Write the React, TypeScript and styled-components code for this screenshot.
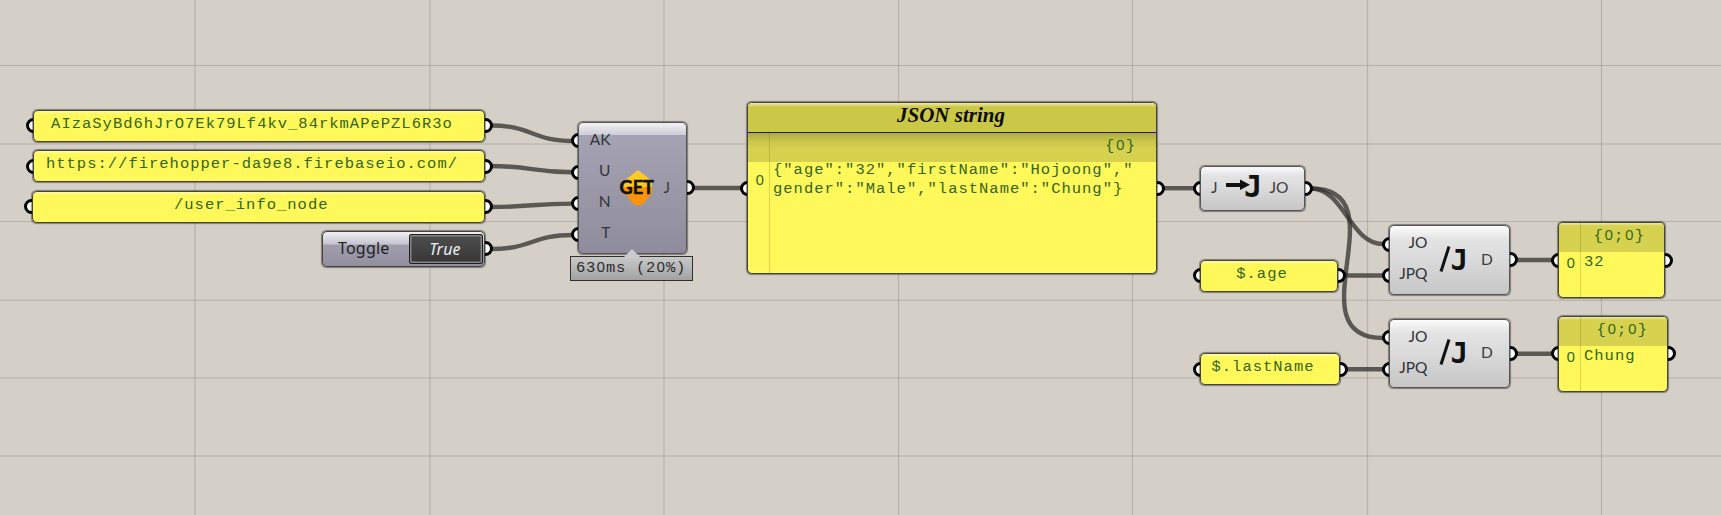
import React from "react";
import styled, { createGlobalStyle, css } from "styled-components";

const Global = createGlobalStyle`
  * { box-sizing: border-box; }
  body { margin: 0; }
`;

const mono = `"Liberation Mono", monospace`;
const sans = `"Noto Sans", sans-serif`;
const label = `Lato, "Noto Sans", sans-serif`;

const Canvas = styled.main`
  position: relative;
  width: 1721px;
  height: 515px;
  overflow: hidden;
  background-color: #d4cfc7;
`;

const Overlay = styled.svg`
  position: absolute;
  inset: 0;
`;

const NodeBox = styled.section<{ $x: number; $y: number; $w: number; $h: number }>`
  position: absolute;
  left: ${(p) => p.$x}px;
  top: ${(p) => p.$y}px;
  width: ${(p) => p.$w}px;
  height: ${(p) => p.$h}px;
  display: flex;
`;

/* A zero-width column on a node's edge; its sockets straddle that edge. */
const PortColumn = styled.div<{ $gap: number; $side: "left" | "right" }>`
  flex: none;
  width: 0;
  display: flex;
  flex-direction: column;
  justify-content: center;
  align-items: center;
  gap: ${(p) => p.$gap - 15}px;
  order: ${(p) => (p.$side === "left" ? 0 : 2)};
`;

const Port = styled.i`
  flex: none;
  width: 15px;
  height: 15px;
  border: 3px solid #000;
  border-radius: 50%;
  background: #fff;
`;

const body = css`
  position: relative;
  order: 1;
  flex: 1;
  min-width: 0;
  border: 1.5px solid #45453c;
  border-radius: 5px;
  overflow: hidden;
  box-shadow: 0 0 1px 0.5px rgba(0, 0, 0, 0.4);
`;

const PanelBody = styled.div`
  ${body}
  display: flex;
  justify-content: center;
  padding: 4px 14px 0 0;
  background: linear-gradient(#fffbb0 0, #fff85a 3px);
`;

const MonoBox = styled.span<{ $pitch: number }>`
  font-family: ${mono};
  font-size: 15.5px;
  letter-spacing: ${(p) => p.$pitch - 9.3}px;
  line-height: 19px;
  color: #33651b;
  white-space: pre;
`;

/* Plain zero, set in the same cell width as the monospaced characters. */
const Zero = styled.span<{ $pitch: number }>`
  display: inline-block;
  width: ${(p) => p.$pitch}px;
  padding-left: 0.5px;
  font-family: ${sans};
  font-size: 15px;
  line-height: 18px;
`;

function Mono({ children, pitch = 10.3, className }: { children: string; pitch?: number; className?: string }) {
  return (
    <MonoBox $pitch={pitch} className={className}>
      {children.split(/(0)/).map((part, i) =>
        part === "0" ? <Zero key={i} $pitch={pitch}>0</Zero> : part
      )}
    </MonoBox>
  );
}

const ListBody = styled.div`
  ${body}
  display: flex;
  flex-direction: column;
  background: #fff85a;
`;

const Title = styled.h1`
  margin: 0;
  height: 29.5px;
  flex: none;
  padding-right: 2px;
  border-bottom: 1.5px solid #23230f;
  background: linear-gradient(#eeeab0 0, #cbc847 4px);
  font: italic bold 21px/24px "Liberation Serif", serif;
  color: #0d0d05;
  text-align: center;
`;

const Path = styled.div<{ $shade?: boolean; $right: number }>`
  height: 29px;
  flex: none;
  padding: 2px ${(p) => p.$right}px 0 0;
  text-align: right;
  background: ${(p) =>
    p.$shade
      ? "linear-gradient(#aeab40, #c8c549 8px, #d6d24f 16px)"
      : "linear-gradient(#eeeaaa 0, #d6d24f 3px)"};
`;

const Entry = styled.div<{ $lift?: boolean }>`
  display: grid;
  grid-template-columns: 21px 1fr;
  column-gap: 4px;
  margin-top: ${(p) => (p.$lift ? -1 : 1)}px;
`;

const Index = styled.div<{ $drop?: number }>`
  padding: ${(p) => p.$drop ?? 0}px 0 0 7px;
`;

const Divider = styled.i<{ $top: number }>`
  position: absolute;
  left: 20.5px;
  top: ${(p) => p.$top}px;
  bottom: 0;
  width: 1px;
  background: rgba(120, 115, 20, 0.28);
`;

const ComponentBody = styled.div<{ $dark?: boolean }>`
  ${body}
  display: flex;
  align-items: center;
  border-color: #555;
  background: ${(p) =>
    p.$dark
      ? "linear-gradient(#f2f2f6 0, #ceccd7 12px, #a5a3b3 12.5px, #8f8d9b 100%)"
      : "linear-gradient(#fcfcfc 0, #e3e3e3 20%, #dcdcdc 45%, #c6c6c6 100%)"};
`;

const Inputs = styled.div<{ $w: number; $row: number }>`
  display: flex;
  flex-direction: column;
  flex: none;
  width: ${(p) => p.$w}px;
  margin-top: -3px;
  text-align: right;
  font: 15.5px/${(p) => p.$row}px ${label};
  color: #333338;
`;

const Output = styled.span<{ $gap: number }>`
  margin-left: ${(p) => p.$gap}px;
  margin-top: -2px;
  font: 15.5px/20px ${label};
  color: #3c3c40;
`;

const Icon = styled.svg`
  flex: none;
  display: block;
  overflow: visible;
`;

const ToggleBody = styled.div`
  ${body}
  display: flex;
  justify-content: space-between;
  padding: 1.5px 1px 1.5px 15px;
  background: linear-gradient(#efeff4 0, #c6c4d0 12px, #a19fae 13px, #92909f 100%);
  font: 16px/28px ${sans};
  letter-spacing: 0.2px;
  color: #222226;
`;

const Switch = styled.button`
  width: 74px;
  padding: 0 2px 0 0;
  border: 1.5px solid #1d1d1d;
  border-radius: 2px;
  background: linear-gradient(#4e4e4e, #363636);
  box-shadow: inset 0 0 0 1.5px #858585;
  font: italic 16px/24px ${sans};
  letter-spacing: 0.2px;
  color: #eee;
`;

const Timer = styled.aside`
  position: absolute;
  left: 570px;
  top: 256px;
  width: 123px;
  height: 25px;
  padding: 0 0 0 5px;
  border: 1.5px solid #303030;
  background: linear-gradient(#c9c9c9, #a2a2a2);
`;

const TimerText = styled(Mono)`
  color: #2b2b2b;
`;

const Tip = styled.svg`
  position: absolute;
  left: 52px;
  top: -9px;
`;

type NodeProps = {
  x: number;
  y: number;
  w: number;
  h: number;
  inputs?: number;
  outputs?: number;
  children: React.ReactNode;
};

function Node({ x, y, w, h, inputs = 1, outputs = 1, children }: NodeProps) {
  return (
    <NodeBox $x={x} $y={y} $w={w} $h={h}>
      <PortColumn $side="left" $gap={31.3}>
        {Array.from({ length: inputs }, (_, i) => <Port key={i} />)}
      </PortColumn>
      <PortColumn $side="right" $gap={31.3}>
        {Array.from({ length: outputs }, (_, i) => <Port key={i} />)}
      </PortColumn>
      {children}
    </NodeBox>
  );
}

function Wire({ from, to, reach }: { from: [number, number]; to: [number, number]; reach?: number }) {
  const r = reach ?? (to[0] - from[0]) / 2;
  return (
    <path
      d={`M${from[0]} ${from[1]}C${from[0] + r} ${from[1]} ${to[0] - r} ${to[1]} ${to[0]} ${to[1]}`}
      fill="none"
      stroke="#30302d"
      strokeOpacity={0.75}
      strokeWidth={4.4}
    />
  );
}

const columns = [195, 430, 664, 898.5, 1132.5, 1367.5, 1601.5];
const rows = [65.5, 144, 221.5, 300.2, 378, 456];

function Wires() {
  return (
    <Overlay width="1721" height="515">
      <g stroke="#77736b" strokeOpacity="0.32" strokeWidth="1.1">
        {columns.map((x) => <line key={x} x1={x} x2={x} y1="0" y2="515" />)}
        {rows.map((y) => <line key={y} x1="0" x2="1721" y1={y} y2={y} />)}
      </g>
      <Wire from={[491, 125.5]} to={[573, 141]} />
      <Wire from={[491, 166]} to={[573, 172.3]} />
      <Wire from={[491, 207]} to={[573, 203.6]} />
      <Wire from={[491, 249]} to={[573, 235]} />
      <Wire from={[693, 188]} to={[742, 188]} />
      <Wire from={[1163, 188.2]} to={[1194, 188.2]} />
      <Wire from={[1311, 188.5]} to={[1383, 244]} reach={33} />
      <Wire from={[1311, 188.5]} to={[1383, 338]} reach={91} />
      <Wire from={[1344, 275.5]} to={[1383, 275.5]} />
      <Wire from={[1346, 369.2]} to={[1383, 369.2]} />
      <Wire from={[1516, 260]} to={[1552, 260]} />
      <Wire from={[1516, 353.8]} to={[1552, 353.8]} />
    </Overlay>
  );
}

function Panel({ x, y, w, text }: { x: number; y: number; w: number; text: string }) {
  return (
    <Node x={x} y={y} w={w} h={32}>
      <PanelBody><Mono>{text}</Mono></PanelBody>
    </Node>
  );
}

function PathQuery({ y }: { y: number }) {
  return (
    <Node x={1389} y={y} w={121} h={69.5} inputs={2}>
      <ComponentBody>
        <Inputs $w={37.5} $row={31}><span>JO</span><span>JPQ</span></Inputs>
        <Icon width="36" height="36" viewBox="0 0 36 36">
          <path d="M21 4.5 13 29.5" stroke="#111" strokeWidth="3" />
          <text x="22.5" y="28" fontFamily="DejaVu Sans Mono" fontWeight="bold" fontSize="29" fill="#111">J</text>
        </Icon>
        <Output $gap={17.5}>D</Output>
      </ComponentBody>
    </Node>
  );
}

function ValuePanel({ y, w, value }: { y: number; w: number; value: string }) {
  return (
    <Node x={1558} y={y} w={w} h={76}>
      <ListBody>
        <Path $right={19}><Mono>{"{0;0}"}</Mono></Path>
        <Entry>
          <Index><Mono>0</Mono></Index>
          <Mono>{value}</Mono>
        </Entry>
        <Divider $top={0} />
      </ListBody>
    </Node>
  );
}

export default function App() {
  return (
    <Canvas>
      <Global />
      <Wires />
      <Panel x={33} y={109.5} w={452} text="AIzaSyBd6hJrO7Ek79Lf4kv_84rkmAPePZL6R3o" />
      <Panel x={33} y={150} w={452} text="https://firehopper-da9e8.firebaseio.com/" />
      <Panel x={31.5} y={190.5} w={453.5} text="/user_info_node" />
      <Node x={322} y={231} w={163} h={35.5} inputs={0}>
        <ToggleBody>
          <span>Toggle</span>
          <Switch>True</Switch>
        </ToggleBody>
      </Node>
      <Node x={578} y={122} w={109} h={131.5} inputs={4}>
        <ComponentBody $dark>
          <Inputs $w={31.5} $row={31.2}>
            <span>AK</span><span>U</span><span>N</span><span>T</span>
          </Inputs>
          <Icon width="44" height="40" viewBox="0 0 44 40">
            <path d="M27 2 41 13v10H13V13z" fill="#ffc928" />
            <path d="M13 19h28v6l-9 11-4.5 1.5L22.5 36l-9.5-12z" fill="#ff9308" />
            <text x="8.5" y="26" textLength="34.5" lengthAdjust="spacingAndGlyphs" fontFamily="Lato" fontWeight="bold" fontSize="19.5" fill="#121212" stroke="#121212" strokeWidth="0.6">GET</text>
          </Icon>
          <Output $gap={9}>J</Output>
        </ComponentBody>
      </Node>
      <Timer>
        <Tip width="18" height="10" viewBox="0 0 18 10"><path d="M0 10 9 1l9 9z" fill="#cbcbcb" /></Tip>
        <TimerText pitch={10}>630ms (20%)</TimerText>
      </Timer>
      <Node x={747} y={102} w={410} h={172}>
        <ListBody>
          <Title>JSON string</Title>
          <Path $shade $right={20}><Mono>{"{0}"}</Mono></Path>
          <Entry $lift>
            <Index $drop={9}><Mono>0</Mono></Index>
            <Mono>{'{"age":"32","firstName":"Hojoong","\ngender":"Male","lastName":"Chung"}'}</Mono>
          </Entry>
          <Divider $top={30} />
        </ListBody>
      </Node>
      <Node x={1200} y={166} w={105} h={44.5}>
        <ComponentBody>
          <Output $gap={10}>J</Output>
          <Icon width="44" height="32" viewBox="0 0 44 32">
            <path d="M8 11h14V7.5l10 5.2L22 18v-3H8z" fill="#111" />
            <text x="26" y="25" fontFamily="DejaVu Sans Mono" fontWeight="bold" fontSize="30" fill="#111">J</text>
          </Icon>
          <Output $gap={8}>JO</Output>
        </ComponentBody>
      </Node>
      <Panel x={1200} y={259.5} w={138} text="$.age" />
      <Panel x={1200} y={353.3} w={140} text="$.lastName" />
      <PathQuery y={225} />
      <PathQuery y={318.7} />
      <ValuePanel y={222} w={107} value="32" />
      <ValuePanel y={315.7} w={110} value="Chung" />
    </Canvas>
  );
}
